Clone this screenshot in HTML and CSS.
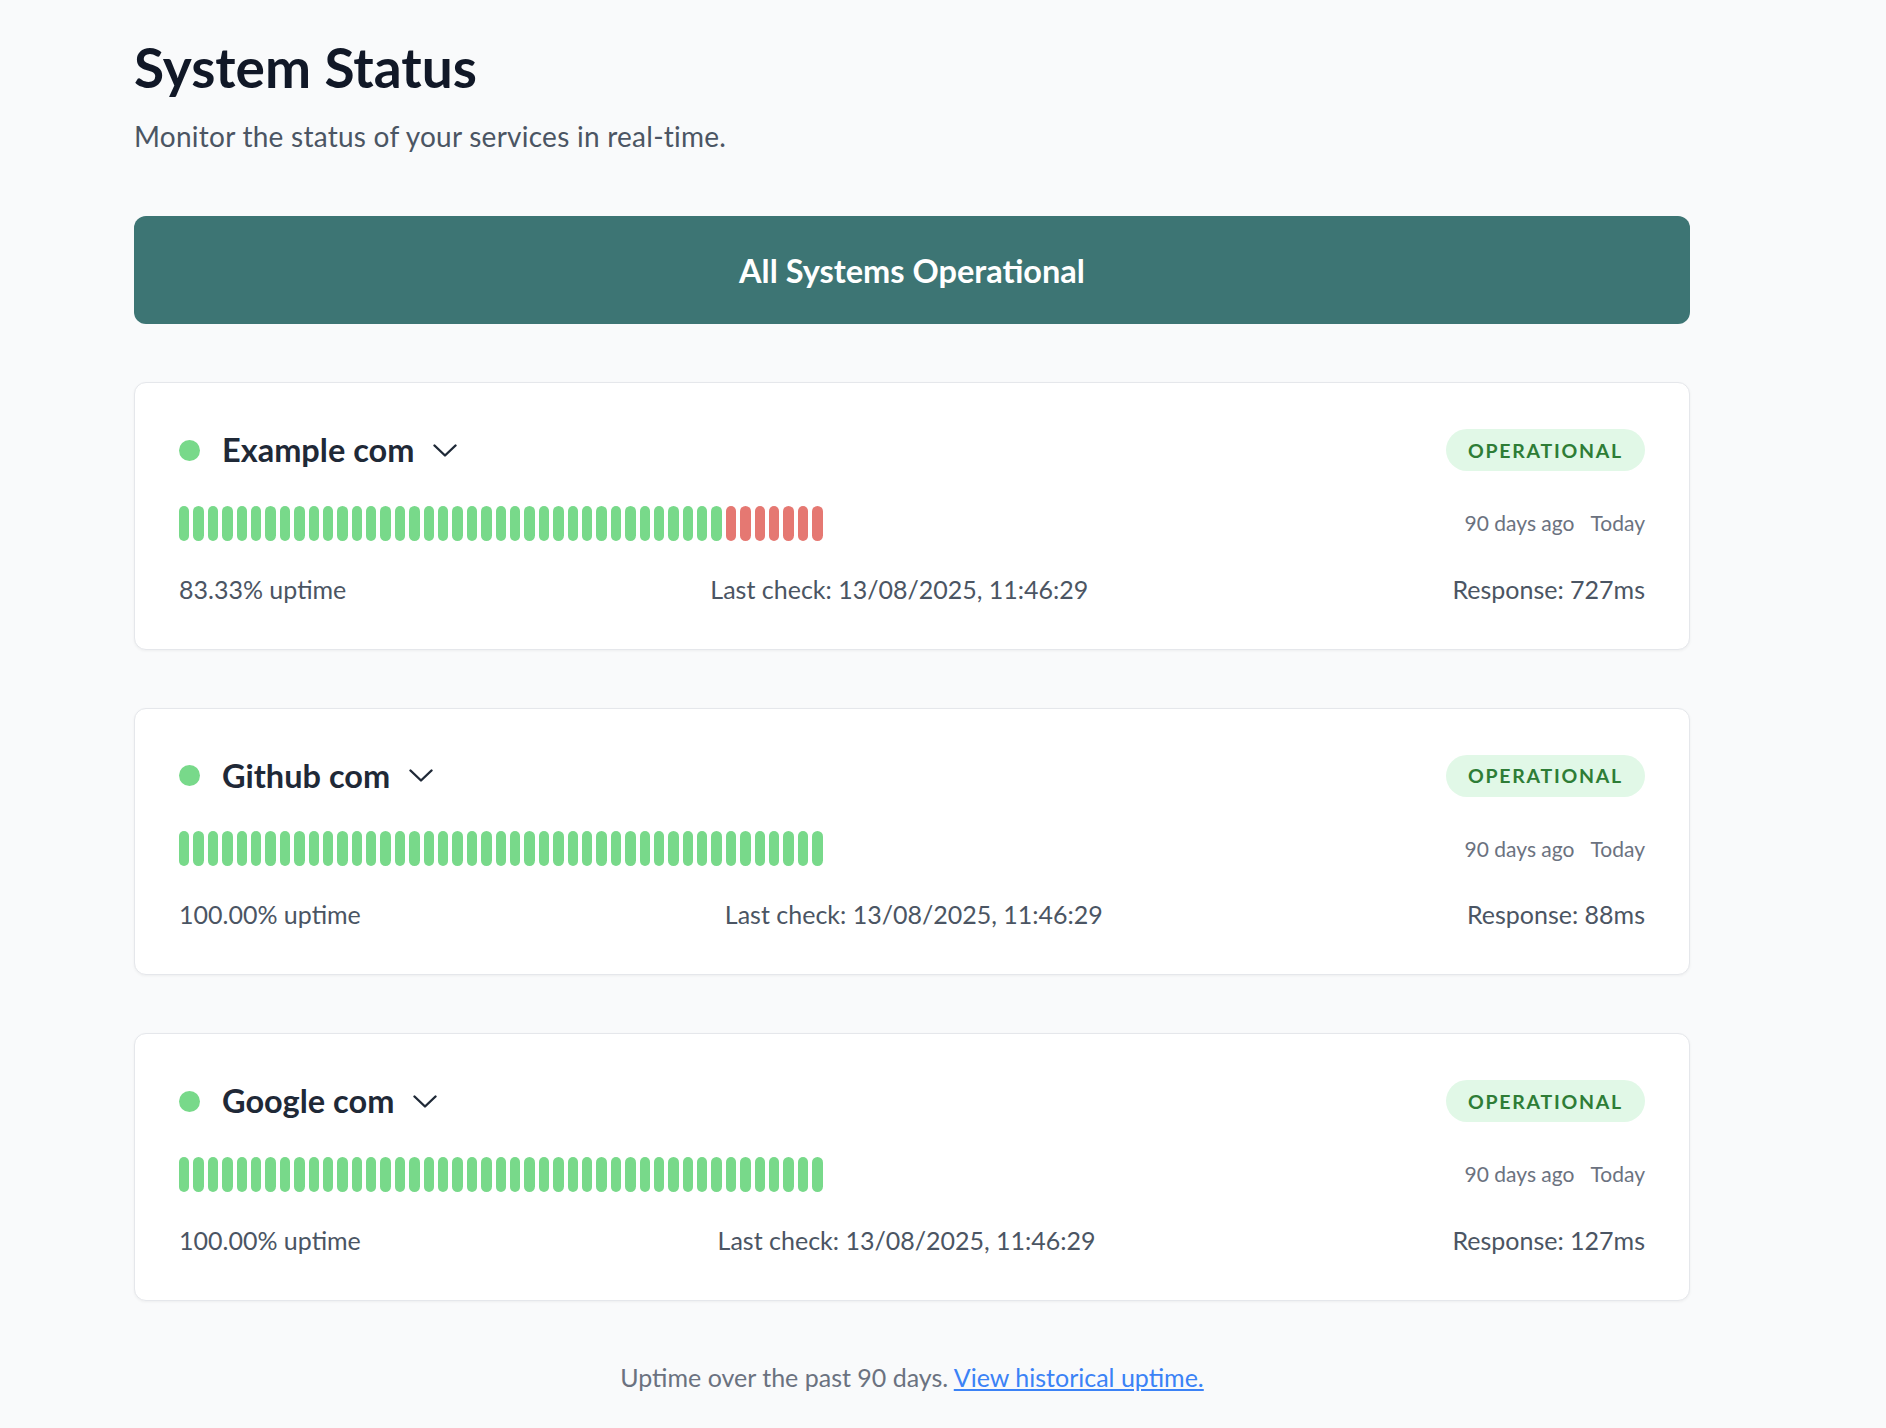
FILE: index.html
```html
<!DOCTYPE html>
<html lang="en">
<head>
<meta charset="utf-8">
<title>System Status</title>
<link rel="stylesheet" href="styles.css">
</head>
<body>
<main class="page">
  <header class="page-header">
    <h1 class="title">System Status</h1>
    <p class="subtitle">Monitor the status of your services in real-time.</p>
  </header>

  <div class="banner">All Systems Operational</div>

  <section class="services">
    <article class="card">
      <div class="card-head">
        <div class="service">
          <span class="dot"></span>
          <h2 class="name">Example com</h2>
          <svg class="chev" viewBox="0 0 24 13" width="24" height="13"><polyline points="1.5,1.5 12,11.5 22.5,1.5" fill="none" stroke="currentColor" stroke-width="2.4" stroke-linecap="round" stroke-linejoin="round"/></svg>
        </div>
        <span class="badge">OPERATIONAL</span>
      </div>
      <div class="history">
        <div class="bars">
          <span class="bar up"></span><span class="bar up"></span><span class="bar up"></span><span class="bar up"></span><span class="bar up"></span><span class="bar up"></span><span class="bar up"></span><span class="bar up"></span><span class="bar up"></span><span class="bar up"></span>
          <span class="bar up"></span><span class="bar up"></span><span class="bar up"></span><span class="bar up"></span><span class="bar up"></span><span class="bar up"></span><span class="bar up"></span><span class="bar up"></span><span class="bar up"></span><span class="bar up"></span>
          <span class="bar up"></span><span class="bar up"></span><span class="bar up"></span><span class="bar up"></span><span class="bar up"></span><span class="bar up"></span><span class="bar up"></span><span class="bar up"></span><span class="bar up"></span><span class="bar up"></span>
          <span class="bar up"></span><span class="bar up"></span><span class="bar up"></span><span class="bar up"></span><span class="bar up"></span><span class="bar up"></span><span class="bar up"></span><span class="bar up"></span>
          <span class="bar down"></span><span class="bar down"></span><span class="bar down"></span><span class="bar down"></span><span class="bar down"></span><span class="bar down"></span><span class="bar down"></span>
        </div>
        <div class="range"><span>90 days ago</span><span>Today</span></div>
      </div>
      <div class="meta">
        <span>83.33% uptime</span>
        <span>Last check: 13/08/2025, 11:46:29</span>
        <span>Response: 727ms</span>
      </div>
    </article>

    <article class="card">
      <div class="card-head">
        <div class="service">
          <span class="dot"></span>
          <h2 class="name">Github com</h2>
          <svg class="chev" viewBox="0 0 24 13" width="24" height="13"><polyline points="1.5,1.5 12,11.5 22.5,1.5" fill="none" stroke="currentColor" stroke-width="2.4" stroke-linecap="round" stroke-linejoin="round"/></svg>
        </div>
        <span class="badge">OPERATIONAL</span>
      </div>
      <div class="history">
        <div class="bars">
          <span class="bar up"></span><span class="bar up"></span><span class="bar up"></span><span class="bar up"></span><span class="bar up"></span><span class="bar up"></span><span class="bar up"></span><span class="bar up"></span><span class="bar up"></span><span class="bar up"></span>
          <span class="bar up"></span><span class="bar up"></span><span class="bar up"></span><span class="bar up"></span><span class="bar up"></span><span class="bar up"></span><span class="bar up"></span><span class="bar up"></span><span class="bar up"></span><span class="bar up"></span>
          <span class="bar up"></span><span class="bar up"></span><span class="bar up"></span><span class="bar up"></span><span class="bar up"></span><span class="bar up"></span><span class="bar up"></span><span class="bar up"></span><span class="bar up"></span><span class="bar up"></span>
          <span class="bar up"></span><span class="bar up"></span><span class="bar up"></span><span class="bar up"></span><span class="bar up"></span><span class="bar up"></span><span class="bar up"></span><span class="bar up"></span><span class="bar up"></span><span class="bar up"></span>
          <span class="bar up"></span><span class="bar up"></span><span class="bar up"></span><span class="bar up"></span><span class="bar up"></span>
        </div>
        <div class="range"><span>90 days ago</span><span>Today</span></div>
      </div>
      <div class="meta">
        <span>100.00% uptime</span>
        <span>Last check: 13/08/2025, 11:46:29</span>
        <span>Response: 88ms</span>
      </div>
    </article>

    <article class="card">
      <div class="card-head">
        <div class="service">
          <span class="dot"></span>
          <h2 class="name">Google com</h2>
          <svg class="chev" viewBox="0 0 24 13" width="24" height="13"><polyline points="1.5,1.5 12,11.5 22.5,1.5" fill="none" stroke="currentColor" stroke-width="2.4" stroke-linecap="round" stroke-linejoin="round"/></svg>
        </div>
        <span class="badge">OPERATIONAL</span>
      </div>
      <div class="history">
        <div class="bars">
          <span class="bar up"></span><span class="bar up"></span><span class="bar up"></span><span class="bar up"></span><span class="bar up"></span><span class="bar up"></span><span class="bar up"></span><span class="bar up"></span><span class="bar up"></span><span class="bar up"></span>
          <span class="bar up"></span><span class="bar up"></span><span class="bar up"></span><span class="bar up"></span><span class="bar up"></span><span class="bar up"></span><span class="bar up"></span><span class="bar up"></span><span class="bar up"></span><span class="bar up"></span>
          <span class="bar up"></span><span class="bar up"></span><span class="bar up"></span><span class="bar up"></span><span class="bar up"></span><span class="bar up"></span><span class="bar up"></span><span class="bar up"></span><span class="bar up"></span><span class="bar up"></span>
          <span class="bar up"></span><span class="bar up"></span><span class="bar up"></span><span class="bar up"></span><span class="bar up"></span><span class="bar up"></span><span class="bar up"></span><span class="bar up"></span><span class="bar up"></span><span class="bar up"></span>
          <span class="bar up"></span><span class="bar up"></span><span class="bar up"></span><span class="bar up"></span><span class="bar up"></span>
        </div>
        <div class="range"><span>90 days ago</span><span>Today</span></div>
      </div>
      <div class="meta">
        <span>100.00% uptime</span>
        <span>Last check: 13/08/2025, 11:46:29</span>
        <span>Response: 127ms</span>
      </div>
    </article>
  </section>

  <p class="footer">Uptime over the past 90 days. <a class="footer-link" href="#">View historical uptime.</a></p>
</main>
</body>
</html>
```

FILE: styles.css
```css
* { box-sizing: border-box; }

html, body {
  margin: 0;
  padding: 0;
  background: #f9fafb;
}

body {
  font-family: Lato, "Noto Sans", sans-serif;
  color: #111827;
}

.page {
  width: 1556px;
  margin-left: 134px;
  padding-top: 37px;
  padding-bottom: 30px;
}

.title {
  margin: 0;
  font-size: 55px;
  line-height: 60px;
  font-weight: 700;
  color: #111827;
}

.subtitle {
  margin: 18px 0 0;
  font-size: 28px;
  line-height: 42px;
  letter-spacing: 0.25px;
  color: #4b5563;
}

.banner {
  margin-top: 59px;
  height: 108px;
  border-radius: 12px;
  background: #3d7574;
  color: #ffffff;
  font-size: 32.5px;
  font-weight: 700;
  display: flex;
  align-items: center;
  justify-content: center;
}

.services {
  margin-top: 58px;
  display: flex;
  flex-direction: column;
  gap: 58px;
}

.card {
  background: #ffffff;
  border: 1px solid #e5e7eb;
  border-radius: 12px;
  box-shadow: 0 1px 3px rgba(0, 0, 0, 0.05);
  padding: 46px 44px 42px 44px;
}

.card-head {
  height: 42px;
  display: flex;
  align-items: center;
  justify-content: space-between;
}

.service {
  display: flex;
  align-items: center;
}

.dot {
  width: 21px;
  height: 21px;
  border-radius: 50%;
  background: #78d98a;
  margin-right: 22px;
}

.name {
  margin: 0;
  font-size: 32.5px;
  line-height: 42px;
  font-weight: 700;
  color: #1f2937;
}

.chev {
  margin-left: 19px;
  color: #1f2937;
  display: block;
}

.badge {
  height: 42px;
  padding: 0 22px;
  border-radius: 21px;
  background: #e1f8e7;
  color: #2e7d36;
  font-size: 19.5px;
  font-weight: 700;
  letter-spacing: 0.09em;
  display: flex;
  align-items: center;
}

.history {
  margin-top: 34.5px;
  display: flex;
  align-items: center;
  justify-content: space-between;
}

.bars {
  display: flex;
  gap: 4px;
}

.bar {
  width: 10.4px;
  height: 35px;
  border-radius: 6px;
}

.bar.up { background: #78d98a; }
.bar.down { background: #e57872; }

.range {
  display: flex;
  gap: 16px;
  font-size: 21px;
  line-height: 30px;
  color: #6b7280;
}

.meta {
  margin-top: 30px;
  display: flex;
  justify-content: space-between;
  font-size: 25px;
  line-height: 36px;
  color: #4b5563;
}

.footer {
  margin: 58px 0 0;
  text-align: center;
  font-size: 25px;
  line-height: 36px;
  color: #6b7280;
}

.footer-link {
  color: #3b82f6;
  text-decoration: underline;
}
```
